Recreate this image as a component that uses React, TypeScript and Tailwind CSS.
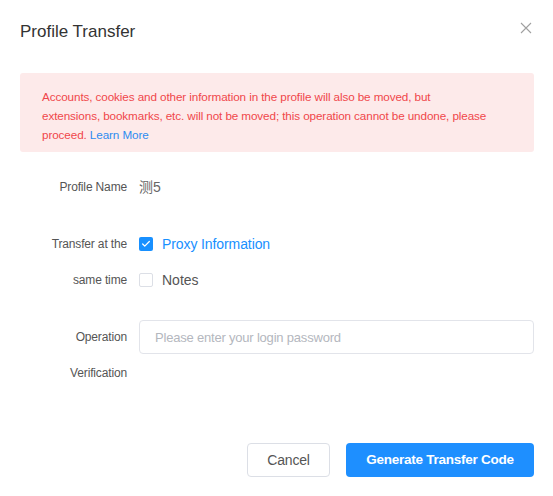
import { Check } from "lucide-react"

const font = { fontFamily: '"Liberation Sans", "Noto Sans CJK SC", Arial, sans-serif' }

function Label({ lines }: { lines: string[] }) {
  return (
    <div className="w-[107px] shrink-0 text-right text-[12px] leading-[36px] tracking-[-0.15px] text-[#555]">
      {lines.map((l) => (
        <div key={l}>{l}</div>
      ))}
    </div>
  )
}

export default function App() {
  return (
    <div style={font} className="w-[553px] h-[496px] bg-white pl-5 pr-[19px] flex flex-col">
      {/* Header */}
      <div className="h-[64px] flex items-center justify-between">
        <h1 className="text-[17px] leading-6 text-[#333]">Profile Transfer</h1>
        <button className="self-start mt-[22px] mr-[2px] text-[#a0a0a0]">
          <svg width="12" height="12" viewBox="0 0 12 12" fill="none" stroke="currentColor" strokeWidth="1.1">
            <path d="M1 1L11 11M11 1L1 11" />
          </svg>
        </button>
      </div>

      {/* Alert */}
      <div className="mt-[9px] h-[79px] rounded-[3px] bg-[#fdeaea] pl-[22px] pt-[14px] text-[11.7px] leading-[19px] tracking-[-0.1px] text-[#f0474b]">
        Accounts, cookies and other information in the profile will also be moved, but
        <br />
        extensions, bookmarks, etc. will not be moved; this operation cannot be undone, please
        <br />
        proceed. <span className="text-[#2d8cf0]">Learn More</span>
      </div>

      {/* Profile name */}
      <div className="mt-[17px] flex gap-3">
        <Label lines={["Profile Name"]} />
        <div className="text-[14px] leading-[36px] text-[#666]">测5</div>
      </div>

      {/* Transfer at the same time */}
      <div className="mt-[21px] flex gap-3">
        <Label lines={["Transfer at the", "same time"]} />
        <div className="flex flex-col">
          <div className="h-9 flex items-center gap-[9px]">
            <span className="w-[14px] h-[14px] rounded-[2px] bg-[#1890ff] flex items-center justify-center">
              <Check className="w-[10px] h-[10px] text-white" strokeWidth={3} />
            </span>
            <span className="text-[14px] text-[#1890ff] tracking-[-0.1px]">Proxy Information</span>
          </div>
          <div className="h-9 flex items-center gap-[9px]">
            <span className="w-[14px] h-[14px] rounded-[2px] border border-[#dcdfe6] bg-white" />
            <span className="text-[14px] text-[#555]">Notes</span>
          </div>
        </div>
      </div>

      {/* Operation verification */}
      <div className="mt-[21px] flex gap-3">
        <Label lines={["Operation", "Verification"]} />
        <div className="flex-1 pt-px">
          <input
            type="password"
            placeholder="Please enter your login password"
            className="w-full h-[34px] rounded-[4px] border border-[#e2e4ea] pl-[15px] text-[13px] tracking-[-0.2px] outline-none placeholder:text-[#b4b7be]"
          />
        </div>
      </div>

      {/* Footer */}
      <div className="mt-[52px] flex justify-end items-center gap-4">
        <button className="w-[83px] h-[34px] rounded-[4px] border border-[#dcdfe6] bg-white text-[14px] tracking-[-0.2px] text-[#555]">
          Cancel
        </button>
        <button className="w-[188px] h-[34px] rounded-[4px] bg-[#1e8fff] text-white text-[13.5px] font-bold tracking-[-0.25px]">
          Generate Transfer Code
        </button>
      </div>
    </div>
  )
}
